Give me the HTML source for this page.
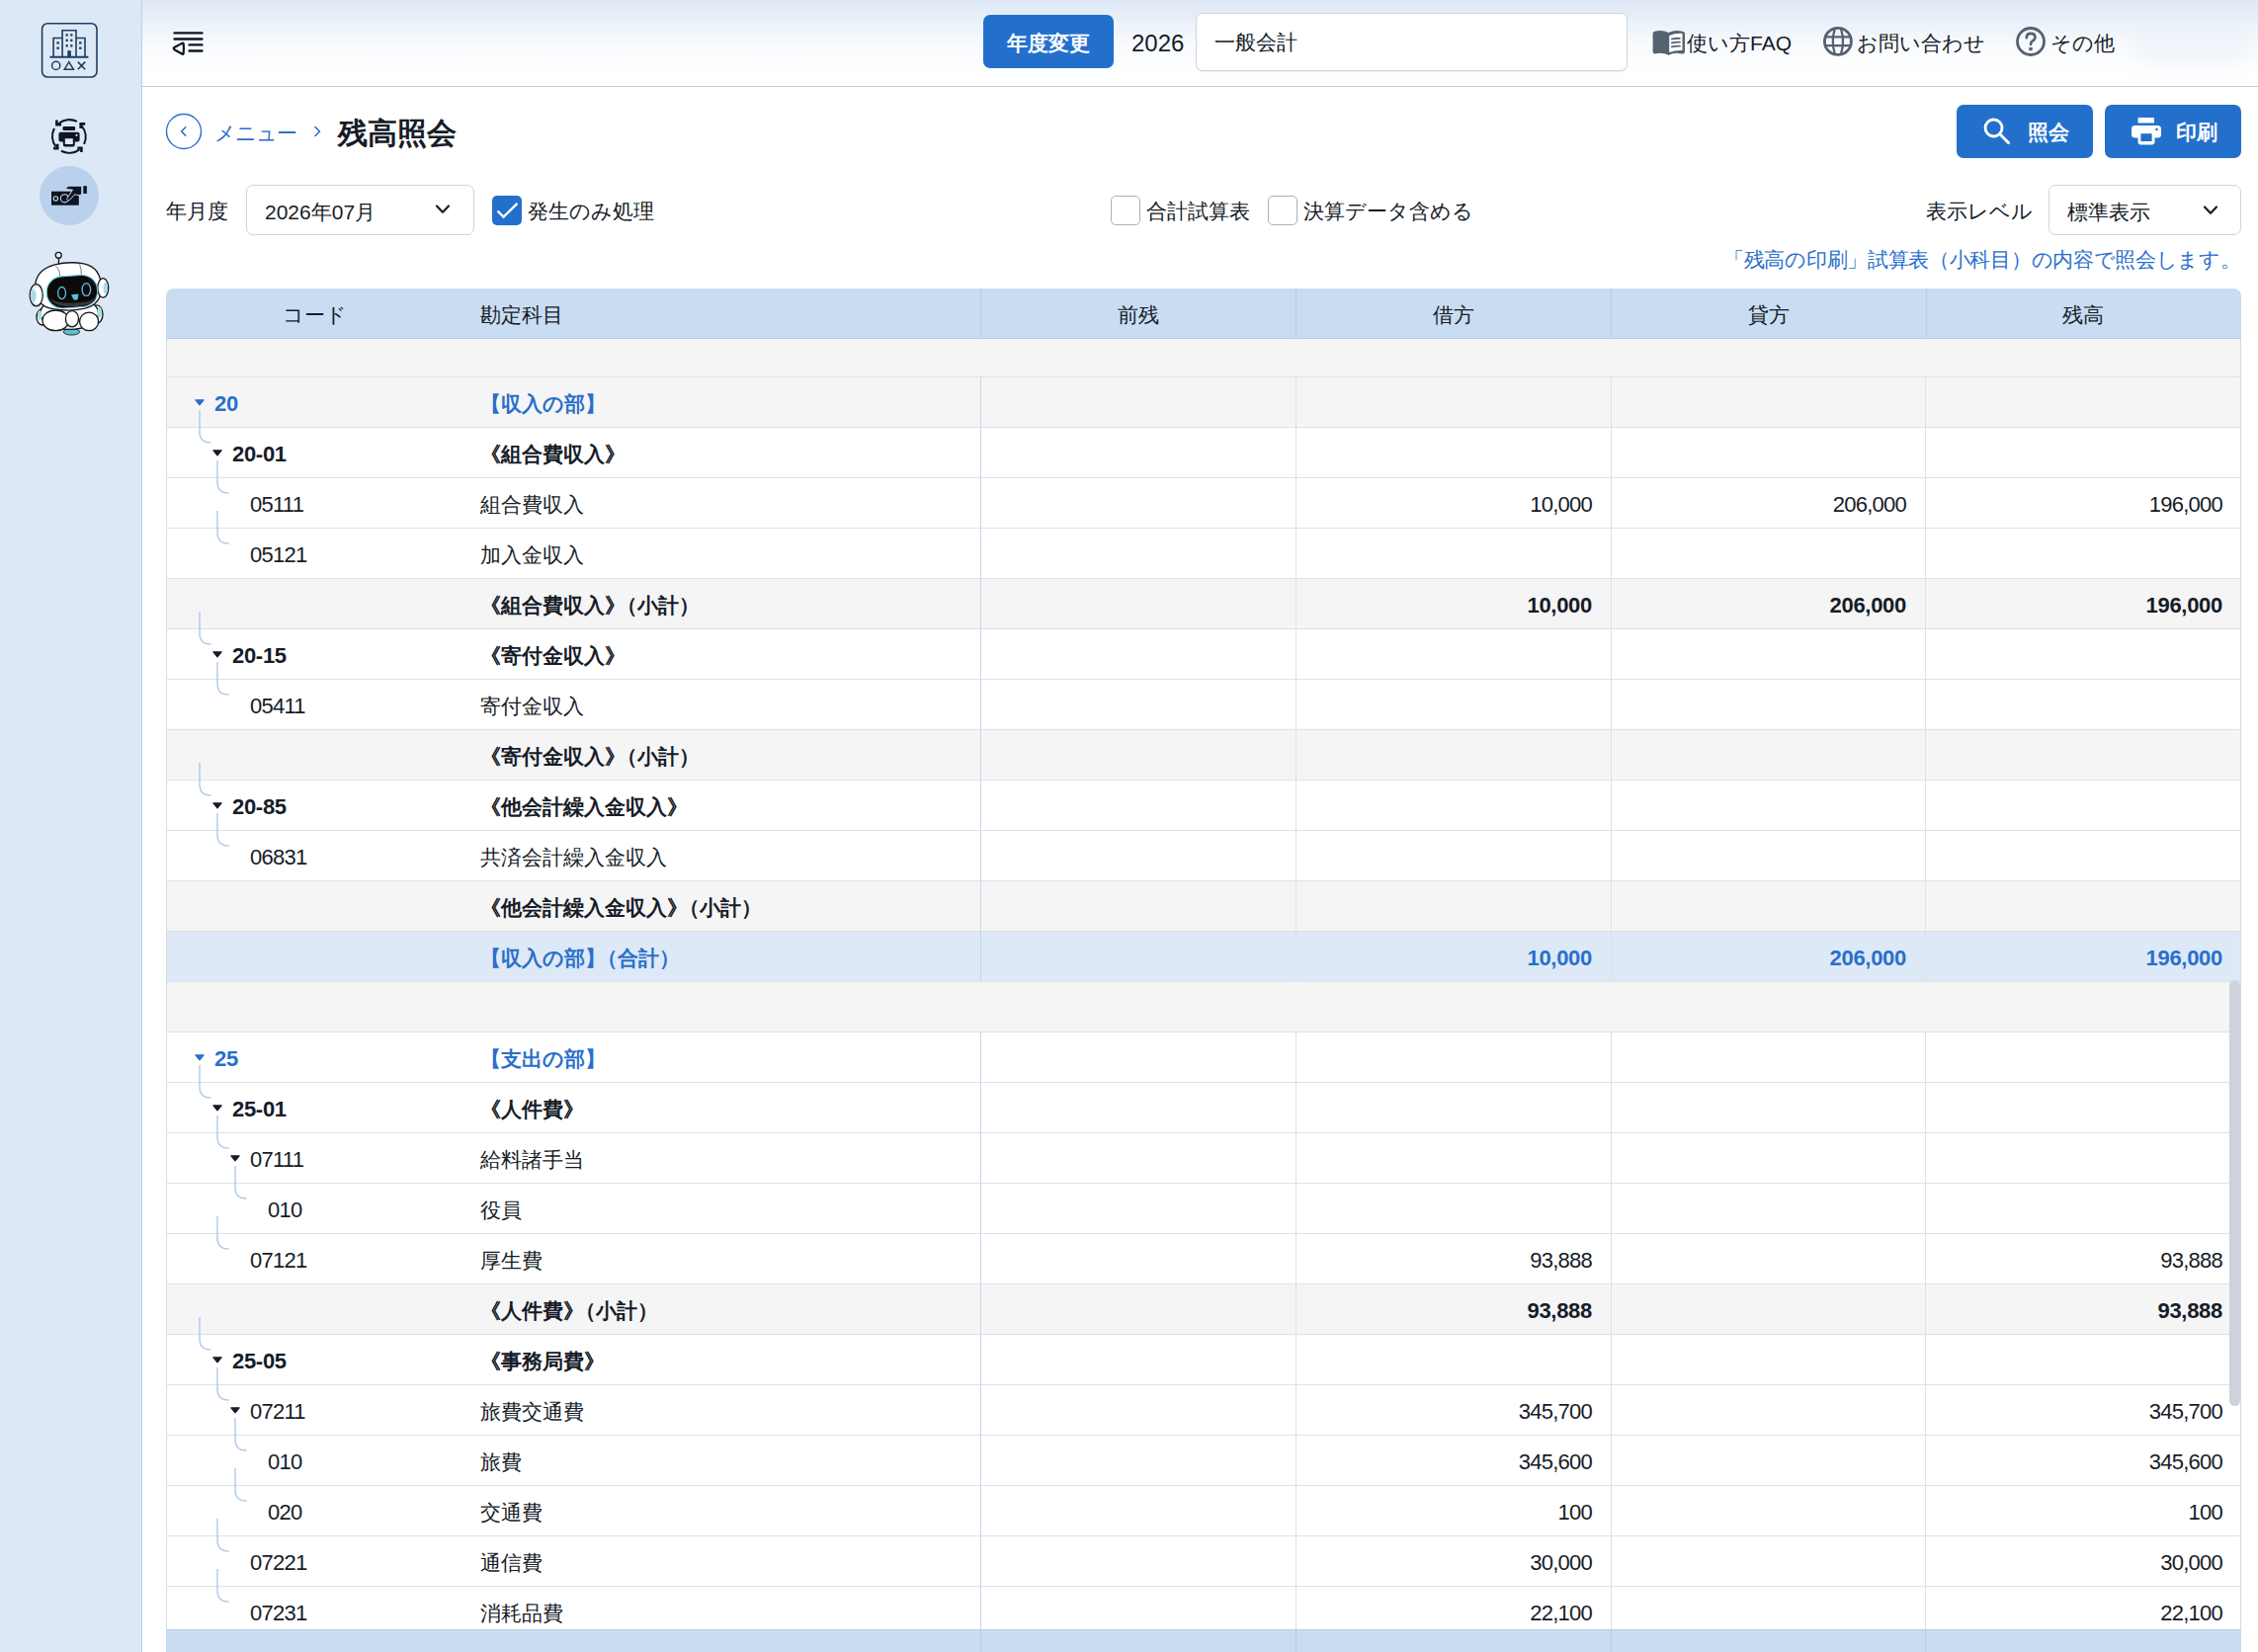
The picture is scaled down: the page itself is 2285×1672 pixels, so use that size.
<!DOCTYPE html>
<html lang="ja">
<head>
<meta charset="utf-8">
<title>残高照会</title>
<style>
*{box-sizing:border-box;margin:0;padding:0}
html,body{width:2285px;height:1672px;overflow:hidden;background:#fff}
body{font-family:"Liberation Sans",sans-serif;color:#161c28;position:relative;font-size:21px}
.abs{position:absolute}
/* sidebar */
#side{position:absolute;left:0;top:0;width:144px;height:1672px;background:#dde8f6;border-right:1px solid #b9cfea}
/* header */
#hdr{position:absolute;left:144px;top:0;width:2141px;height:88px;background:linear-gradient(180deg,#dde8f5 0%,#edf3fa 30%,#f8fafd 52%,#fdfeff 75%,#ffffff 100%);border-bottom:1px solid #b9cfea}
.btn{position:absolute;background:#2370cc;color:#fff;border-radius:7px;font-weight:bold}
.txt{position:absolute;white-space:nowrap;line-height:1}
.sel{position:absolute;background:#fff;border:1px solid #cfd4dc;border-radius:7px}
.cb{position:absolute;width:30px;height:30px;border:1px solid #a9b0bc;border-radius:5px;background:#fff}
/* table */
#tbl{position:absolute;left:168px;top:0;width:2100px;height:1672px}
#thead{position:absolute;left:0;top:292px;width:2100px;height:51px;background:#c9ddf2;border-bottom:1px solid #b4cce9;border-radius:8px 8px 0 0}
#thead .hd{position:absolute;top:0;height:50px;width:1px;background:#b7cdea}
#thead .ht{position:absolute;top:2px;line-height:50px;white-space:nowrap}
.row{position:absolute;left:0;width:2100px;height:51px;border-bottom:1px solid #dde1e9}
.vd{position:absolute;top:0;height:50px;width:1px;background:#dde1e9}
.vd.first{left:824px;background:#c3d6ef}
.code,.name,.num{position:absolute;top:0;line-height:50px;padding-top:2px;white-space:nowrap}
.code,.num{font-size:22px;letter-spacing:-0.75px}
.code.t-bold,.num.t-bold,.code.t-blue,.num.t-blue{letter-spacing:-0.3px}
.name{left:318px}
.sq{margin-left:-9.5px}
.t-blue{color:#2a6fcc;font-weight:bold}
.t-bold{font-weight:bold}
.tri{position:absolute;top:22px}
.conn{position:absolute;z-index:2;overflow:visible}
#spacer0{position:absolute;left:0;top:343px;width:2100px;height:39px;background:#f5f5f5;border-bottom:1px solid #dde1e9}
#lb{position:absolute;left:0;top:343px;width:1px;height:1329px;background:#d6dbe4;z-index:3}
#rb{position:absolute;left:2099px;top:343px;width:1px;height:1329px;background:#d6dbe4;z-index:3}
#foot{position:absolute;left:0;top:1649px;width:2100px;height:23px;background:#c9ddf2;border-top:1px solid #b4cce9;z-index:3}
#foot .hd{position:absolute;top:0;height:23px;width:1px;background:#b7cdea}
#scroll{position:absolute;left:2256px;top:992px;width:11px;height:431px;border-radius:6px;background:#cdd2db;z-index:4}
</style>
</head>
<body>
<div id="side">
  <!-- logo -->
  <svg class="abs" style="left:30px;top:10px" width="80" height="80" viewBox="0 0 80 80">
    <g fill="none" stroke="#1f3e60" stroke-width="1.6" stroke-linejoin="miter">
      <rect x="12.6" y="13.8" width="55.4" height="54.2" rx="5.6"/>
      <path d="M24.1 47.7 V28.5 H33.1 M33.1 47.7 V20.8 H47 V47.7 M47 28.5 H56 V47.7"/>
      <path d="M21.2 47.7 H58.7" stroke-width="1.9" stroke-linecap="round"/>
      <circle cx="26.7" cy="56.4" r="4.1" stroke-width="1.5"/>
      <path d="M35.2 60.3 L39.8 52.6 L44.4 60.3 Z" stroke-width="1.5"/>
      <path d="M48.8 52.6 L56.2 60.2 M56.2 52.6 L48.8 60.2" stroke-width="1.6"/>
    </g>
    <g fill="#1f3e60">
      <rect x="36.6" y="24.2" width="2.2" height="2.4"/><rect x="41.2" y="24.2" width="2.2" height="2.4"/>
      <rect x="36.6" y="29.6" width="2.2" height="2.4"/><rect x="41.2" y="29.6" width="2.2" height="2.4"/>
      <rect x="36.6" y="35.1" width="2.2" height="2.4"/><rect x="41.2" y="35.1" width="2.2" height="2.4"/>
      <rect x="27.4" y="32.2" width="2.4" height="2.4"/><rect x="27.4" y="37.5" width="2.4" height="2.4"/>
      <rect x="50.1" y="32.2" width="2.4" height="2.4"/><rect x="50.1" y="37.5" width="2.4" height="2.4"/>
      <rect x="38.3" y="41.2" width="3.6" height="6.5"/>
    </g>
  </svg>
  <!-- print rotate icon -->
  <svg class="abs" style="left:50px;top:118px" width="40" height="40" viewBox="0 0 40 40">
    <g fill="none" stroke="#0f1522" stroke-width="2.1">
      <path d="M27.9 4.9 A17.3 17.3 0 0 0 9.2 7.2"/>
      <path d="M32.6 9.4 A17.3 17.3 0 0 1 35.1 27.9"/>
      <path d="M30.4 33.3 A17.3 17.3 0 0 1 11.9 34.8"/>
      <path d="M6.6 30.4 A17.3 17.3 0 0 1 4.9 11.9"/>
    </g>
    <g fill="none" stroke="#0f1522" stroke-width="2.6" stroke-linejoin="miter" stroke-linecap="butt">
      <path d="M7.4 3.6 V8.3 H12"/>
      <path d="M36.2 7.4 H31.7 V11.9"/>
      <path d="M28.4 31.9 H32.4 V36"/>
      <path d="M4 32.1 H8.2 V27.8"/>
    </g>
    <g fill="#0f1522">
      <rect x="13.5" y="10" width="12.6" height="4" rx="1"/>
      <path d="M11.4 15.8 H28.6 Q30.6 15.8 30.6 17.8 V23.4 Q30.6 25.4 28.6 25.4 H25.8 V28.6 Q25.8 30.6 23.8 30.6 H15.8 Q13.8 30.6 13.8 28.6 V25.4 H11.4 Q9.4 25.4 9.4 23.4 V17.8 Q9.4 15.8 11.4 15.8 Z"/>
    </g>
    <rect x="15.8" y="22.2" width="8" height="5.8" fill="#dde8f6"/>
    <circle cx="27.5" cy="18.8" r="1.1" fill="#dde8f6"/>
  </svg>
  <!-- active circle -->
  <div class="abs" style="left:40px;top:168px;width:60px;height:60px;border-radius:50%;background:#bad1ee"></div>
  <svg class="abs" style="left:46px;top:178px" width="48" height="40" viewBox="0 0 48 40">
    <rect x="6" y="15.7" width="27.8" height="14" fill="#0f1522"/>
    <circle cx="10.4" cy="22.9" r="2.2" fill="none" stroke="#c3daf4" stroke-width="1.1"/>
    <circle cx="19.4" cy="22.8" r="4.1" fill="none" stroke="#c3daf4" stroke-width="1.1"/>
    <path d="M19.9 13.6 L23.2 10.2 H36.8 V18.2 Q35.6 19.7 33.4 19.6 Q31.4 19.5 29.8 18.6 L24.6 24.3 Q23.4 25.4 22.3 24.5 Q21.3 23.6 22.1 22.4 L27.3 14.4 Z" fill="#0f1522" stroke="#c3daf4" stroke-width="1"/>
    <path d="M19.4 13.9 L27.6 14.2" stroke="#c3daf4" stroke-width="1"/>
    <rect x="38.3" y="10.2" width="3.6" height="7.7" fill="#0f1522"/>
  </svg>
  <!-- robot -->
  <svg class="abs" style="left:25px;top:250px" width="90" height="90" viewBox="0 0 1652 1652">
    <g stroke="#161616" stroke-width="24" fill="#fff">
      <line x1="632" y1="200" x2="632" y2="320"/>
      <circle cx="628" cy="152" r="55" fill="#d8f0f4"/>
      <ellipse cx="870" cy="1575" rx="150" ry="60" fill="#5bbfd2" stroke-width="16"/>
      <ellipse cx="330" cy="1300" rx="110" ry="150"/>
      <ellipse cx="1340" cy="1250" rx="110" ry="170"/>
      <ellipse cx="830" cy="1230" rx="540" ry="300"/>
      <path d="M190 760 Q200 420 560 330 Q820 260 1100 310 Q1420 380 1420 760 Q1420 1060 1120 1140 Q820 1210 520 1150 Q190 1080 190 760 Z"/>
      <ellipse cx="215" cy="895" rx="120" ry="205"/>
      <ellipse cx="1455" cy="760" rx="100" ry="180"/>
      <ellipse cx="575" cy="1365" rx="245" ry="190"/>
      <ellipse cx="1195" cy="1385" rx="175" ry="170"/>
      <ellipse cx="880" cy="1335" rx="120" ry="150"/>
    </g>
    <ellipse cx="230" cy="900" rx="85" ry="170" fill="none" stroke="#9fd8e6" stroke-width="14"/>
    <ellipse cx="160" cy="905" rx="55" ry="125" fill="#a8dde8"/>
    <ellipse cx="1500" cy="760" rx="40" ry="110" fill="#a8dde8"/>
    <ellipse cx="280" cy="1270" rx="40" ry="90" fill="#a8dde8"/>
    <ellipse cx="1390" cy="1210" rx="40" ry="100" fill="#a8dde8"/>
    <path d="M580 360 Q660 420 650 540 M1020 320 Q1060 430 1050 520" stroke="#333" stroke-width="12" fill="none"/>
    <rect x="410" y="535" width="940" height="590" rx="290" ry="280" transform="rotate(-4 880 830)" fill="#0d0a0b" stroke="#62c8dc" stroke-width="20"/>
    <path d="M470 930 Q520 1090 760 1100 Q1050 1110 1250 1040 Q1320 1000 1330 900 Q1280 1010 1060 1030 Q760 1060 580 1010 Q500 980 470 930 Z" fill="#3a3638"/>
    <path d="M1180 590 Q1300 640 1320 760 Q1300 660 1180 600 Z" fill="#3a3638"/>
    <ellipse cx="690" cy="855" rx="72" ry="112" fill="none" stroke="#56c1dc" stroke-width="24"/>
    <ellipse cx="1145" cy="790" rx="78" ry="118" fill="none" stroke="#56c1dc" stroke-width="24"/>
    <path d="M865 885 L1000 870 L985 975 Q940 1000 905 975 Z" fill="#56c1dc"/>
  </svg>
</div>

<div id="hdr">
  <!-- hamburger -->
  <svg class="abs" style="left:21px;top:22px" width="50" height="42" viewBox="0 0 50 42">
    <g fill="none" stroke="#0f1522" stroke-width="2.4" stroke-linecap="round">
      <path d="M11.6 11.4 H39.4"/>
      <path d="M11.6 17.5 H39.4"/>
      <path d="M26.6 23.4 H39.4"/>
      <path d="M26.6 29.5 H39.4"/>
      <path d="M10.9 27.1 Q10.6 26.6 11.4 26 L19.6 21.6 Q20.6 21.2 20.7 22.4 Q21.2 27.2 20.7 32 Q20.6 33.2 19.6 32.7 L11.4 28.2 Q10.6 27.6 10.9 27.1 Z" stroke-width="2.2" stroke-linejoin="round"/>
    </g>
  </svg>
  <div class="btn" style="left:851px;top:15px;width:132px;height:54px;font-size:21px;line-height:58px;text-align:center">年度変更</div>
  <div class="txt" style="left:1001px;top:32px;font-size:24px">2026</div>
  <div class="sel" style="left:1066px;top:13px;width:437px;height:59px;box-shadow:0 1px 1px rgba(0,0,0,.06)">
    <div class="txt" style="left:18px;top:18px;font-size:21px">一般会計</div>
  </div>
  <!-- book icon -->
  <svg class="abs" style="left:1528px;top:30px" width="34" height="27" viewBox="0 0 34 27">
    <path d="M0.6 4 Q0.6 2.2 2.5 1.8 Q5 1 8.4 0.9 Q12.5 0.9 16.5 2.9 Q20.5 0.9 24.6 0.9 Q28 1 30.6 1.8 Q33 2.3 33 4 V22.6 Q33 24.3 31 24.4 Q28 24.2 24.6 23.7 Q20.5 23.7 16.6 25.8 Q12.5 23.7 8.4 23.7 Q5 24 2.6 24.4 Q0.6 24.3 0.6 22.6 Z" fill="#556272"/>
    <path d="M17.2 6 Q23 3.6 30.5 3.9 V21.1 Q23 20.8 17.2 23 Z" fill="#fff"/>
    <path d="M19.8 9.5 Q23.5 8.6 27.9 8.8 M19.8 13.4 Q23.5 12.5 27.9 12.7 M19.8 17.3 Q23.5 16.4 27.9 16.6" fill="none" stroke="#556272" stroke-width="1.8" stroke-linecap="round"/>
  </svg>
  <div class="txt" style="left:1563px;top:33px;font-size:21px">使い方FAQ</div>
  <!-- globe -->
  <svg class="abs" style="left:1700px;top:26px" width="32" height="32" viewBox="0 0 32 32">
    <g fill="none" stroke="#556272">
      <circle cx="15.9" cy="15.9" r="13.5" stroke-width="2.8"/>
      <path d="M12.7 3.5 L10.9 11.2 V20.2 L12.7 28.3 M19.1 3.5 L20.9 11.2 V20.2 L19.1 28.3" stroke-width="2.3" stroke-linejoin="round"/>
      <path d="M2.5 11.3 H29.3 M2.5 20.1 H29.3" stroke-width="2.2"/>
    </g>
  </svg>
  <div class="txt" style="left:1735px;top:33px;font-size:21px">お問い合わせ</div>
  <!-- question -->
  <svg class="abs" style="left:1895px;top:26px" width="32" height="32" viewBox="0 0 32 32">
    <circle cx="16" cy="16" r="13.5" fill="none" stroke="#556272" stroke-width="2.8"/>
    <path d="M11.8 12.2 Q11.8 7.8 16 7.8 Q20.4 7.8 20.4 11.8 Q20.4 14.2 17.6 15.6 Q16 16.4 16 19" fill="none" stroke="#556272" stroke-width="2.7" stroke-linecap="round"/>
    <rect x="14.3" y="22" width="3.4" height="3.2" fill="#556272"/>
  </svg>
  <div class="txt" style="left:1931px;top:33px;font-size:21px">その他</div>
  <!-- blurred user -->
  <div class="abs" style="left:2015px;top:22px;width:118px;height:46px;border-radius:20px;background:rgba(232,239,248,.45);filter:blur(8px)"></div>
</div>

<!-- breadcrumb -->
<svg class="abs" style="left:166px;top:113px" width="40" height="40" viewBox="0 0 40 40">
  <circle cx="20" cy="20" r="17.5" fill="none" stroke="#2a6fcc" stroke-width="1.4"/>
  <path d="M21.8 15.8 L17.6 20 L21.8 24.2" fill="none" stroke="#2a6fcc" stroke-width="1.6" stroke-linecap="round" stroke-linejoin="round"/>
</svg>
<div class="txt" style="left:217px;top:124px;font-size:21px;letter-spacing:-1px;color:#2a6fcc">メニュー</div>
<svg class="abs" style="left:315px;top:125px" width="14" height="16" viewBox="0 0 14 16">
  <path d="M4 3.5 L8.5 8 L4 12.5" fill="none" stroke="#2a6fcc" stroke-width="1.6" stroke-linecap="round" stroke-linejoin="round"/>
</svg>
<div class="txt" style="left:342px;top:120px;font-size:30px;font-weight:bold">残高照会</div>

<div class="btn" style="left:1980px;top:106px;width:138px;height:54px"></div>
<svg class="abs" style="left:2006px;top:118px" width="30" height="30" viewBox="0 0 30 30">
  <circle cx="11.5" cy="11.5" r="8.5" fill="none" stroke="#fff" stroke-width="2.8"/>
  <path d="M17.8 17.8 L26.5 26.5" stroke="#fff" stroke-width="3" stroke-linecap="round"/>
</svg>
<div class="txt" style="left:2052px;top:123px;font-size:21px;color:#fff;font-weight:bold">照会</div>
<div class="btn" style="left:2130px;top:106px;width:138px;height:54px"></div>
<svg class="abs" style="left:2156px;top:118px" width="32" height="30" viewBox="0 0 32 30">
  <rect x="7.5" y="1" width="16.5" height="5.6" rx="1.2" fill="#fff"/>
  <path d="M4.5 9 H27.5 Q31 9 31 12.5 V18 Q31 21.5 27.5 21.5 H24.5 V25.5 Q24.5 28.5 21.5 28.5 H10.5 Q7.5 28.5 7.5 25.5 V21.5 H4.5 Q1 21.5 1 18 V12.5 Q1 9 4.5 9 Z" fill="#fff"/>
  <rect x="10.4" y="17.2" width="11.2" height="7.8" fill="#2370cc"/>
  <circle cx="26.5" cy="13" r="1.3" fill="#2370cc"/>
</svg>
<div class="txt" style="left:2202px;top:123px;font-size:21px;color:#fff;font-weight:bold">印刷</div>

<!-- filter row -->
<div class="txt" style="left:168px;top:203px;font-size:21px">年月度</div>
<div class="sel" style="left:249px;top:187px;width:231px;height:51px">
  <div class="txt" style="left:18px;top:16px;font-size:21px">2026年07月</div>
  <svg class="abs" style="left:190px;top:18px" width="16" height="12" viewBox="0 0 16 12"><path d="M2 2.5 L8 8.8 L14 2.5" fill="none" stroke="#161c28" stroke-width="2.2" stroke-linecap="round" stroke-linejoin="round"/></svg>
</div>
<div class="abs" style="left:498px;top:198px;width:30px;height:30px;border-radius:5px;background:#2370cc"></div>
<svg class="abs" style="left:498px;top:198px" width="30" height="30" viewBox="0 0 30 30"><path d="M5.5 15.5 L11.5 21.5 L25.5 7.8" fill="none" stroke="#fff" stroke-width="2.4"/></svg>
<div class="txt" style="left:534px;top:203px;font-size:21px">発生のみ処理</div>
<div class="cb" style="left:1124px;top:198px"></div>
<div class="txt" style="left:1160px;top:203px;font-size:21px">合計試算表</div>
<div class="cb" style="left:1283px;top:198px"></div>
<div class="txt" style="left:1319px;top:203px;font-size:21px">決算データ含める</div>
<div class="txt" style="left:1949px;top:203px;font-size:21px">表示レベル</div>
<div class="sel" style="left:2073px;top:187px;width:195px;height:51px">
  <div class="txt" style="left:18px;top:16px;font-size:21px">標準表示</div>
  <svg class="abs" style="left:155px;top:19px" width="16" height="12" viewBox="0 0 16 12"><path d="M2 2.5 L8 8.8 L14 2.5" fill="none" stroke="#161c28" stroke-width="2.2" stroke-linecap="round" stroke-linejoin="round"/></svg>
</div>
<div class="txt" style="left:1744px;top:252px;font-size:21px;letter-spacing:-0.3px;color:#2a6fcc">「残高の印刷」試算表（小科目）の内容で照会します。</div>

<div id="tbl">
  <div id="thead">
    <div class="ht" style="left:118px">コード</div>
    <div class="ht" style="left:318px">勘定科目</div>
    <div class="hd" style="left:824px"></div>
    <div class="hd" style="left:1143px"></div>
    <div class="hd" style="left:1462px"></div>
    <div class="hd" style="left:1781px"></div>
    <div class="ht" style="left:824px;width:319px;text-align:center">前残</div>
    <div class="ht" style="left:1143px;width:319px;text-align:center">借方</div>
    <div class="ht" style="left:1462px;width:319px;text-align:center">貸方</div>
    <div class="ht" style="left:1780px;width:320px;text-align:center">残高</div>
  </div>
  <div id="spacer0"></div>
<div class="row" style="top:382px;background:#f5f5f5">
<div class="vd first"></div>
<div class="vd" style="left:1143px"></div>
<div class="vd" style="left:1462px"></div>
<div class="vd" style="left:1780px"></div>
<div class="code t-blue" style="left:49px">20</div>
<svg class="tri" style="left:29px" width="10" height="7" viewBox="0 0 10 7"><path d="M0.6 0.8 L9.4 0.8 L5 6.2 Z" fill="#2a6fcc" stroke="#2a6fcc" stroke-width="1" stroke-linejoin="round"/></svg>
<div class="name t-blue">【収入の部】</div>
</div>
<div class="row" style="top:433px;background:#ffffff">
<div class="vd first"></div>
<div class="vd" style="left:1143px"></div>
<div class="vd" style="left:1462px"></div>
<div class="vd" style="left:1780px"></div>
<div class="code t-bold" style="left:67px">20-01</div>
<svg class="tri" style="left:47px" width="10" height="7" viewBox="0 0 10 7"><path d="M0.6 0.8 L9.4 0.8 L5 6.2 Z" fill="#161c28" stroke="#161c28" stroke-width="1" stroke-linejoin="round"/></svg>
<div class="name t-bold">《組合費収入》</div>
</div>
<svg class="conn" style="left:32px;top:415px" width="16" height="35" viewBox="0 0 16 35"><path d="M2 0 V22 Q2 33 13.5 33" fill="none" stroke="#a9c5ea" stroke-width="1.3"/></svg>
<div class="row" style="top:484px;background:#ffffff">
<div class="vd first"></div>
<div class="vd" style="left:1143px"></div>
<div class="vd" style="left:1462px"></div>
<div class="vd" style="left:1780px"></div>
<div class="code t-norm" style="left:85px">05111</div>
<div class="name t-norm">組合費収入</div>
<div class="num t-norm" style="right:657px">10,000</div>
<div class="num t-norm" style="right:339px">206,000</div>
<div class="num t-norm" style="right:19px">196,000</div>
</div>
<svg class="conn" style="left:50px;top:466px" width="16" height="35" viewBox="0 0 16 35"><path d="M2 0 V22 Q2 33 13.5 33" fill="none" stroke="#a9c5ea" stroke-width="1.3"/></svg>
<div class="row" style="top:535px;background:#ffffff">
<div class="vd first"></div>
<div class="vd" style="left:1143px"></div>
<div class="vd" style="left:1462px"></div>
<div class="vd" style="left:1780px"></div>
<div class="code t-norm" style="left:85px">05121</div>
<div class="name t-norm">加入金収入</div>
</div>
<svg class="conn" style="left:50px;top:517px" width="16" height="35" viewBox="0 0 16 35"><path d="M2 0 V22 Q2 33 13.5 33" fill="none" stroke="#a9c5ea" stroke-width="1.3"/></svg>
<div class="row" style="top:586px;background:#f5f5f5">
<div class="vd first"></div>
<div class="vd" style="left:1143px"></div>
<div class="vd" style="left:1462px"></div>
<div class="vd" style="left:1780px"></div>
<div class="name t-bold">《組合費収入》<span class="sq">（小計）</span></div>
<div class="num t-bold" style="right:657px">10,000</div>
<div class="num t-bold" style="right:339px">206,000</div>
<div class="num t-bold" style="right:19px">196,000</div>
</div>
<div class="row" style="top:637px;background:#ffffff">
<div class="vd first"></div>
<div class="vd" style="left:1143px"></div>
<div class="vd" style="left:1462px"></div>
<div class="vd" style="left:1780px"></div>
<div class="code t-bold" style="left:67px">20-15</div>
<svg class="tri" style="left:47px" width="10" height="7" viewBox="0 0 10 7"><path d="M0.6 0.8 L9.4 0.8 L5 6.2 Z" fill="#161c28" stroke="#161c28" stroke-width="1" stroke-linejoin="round"/></svg>
<div class="name t-bold">《寄付金収入》</div>
</div>
<svg class="conn" style="left:32px;top:619px" width="16" height="35" viewBox="0 0 16 35"><path d="M2 0 V22 Q2 33 13.5 33" fill="none" stroke="#a9c5ea" stroke-width="1.3"/></svg>
<div class="row" style="top:688px;background:#ffffff">
<div class="vd first"></div>
<div class="vd" style="left:1143px"></div>
<div class="vd" style="left:1462px"></div>
<div class="vd" style="left:1780px"></div>
<div class="code t-norm" style="left:85px">05411</div>
<div class="name t-norm">寄付金収入</div>
</div>
<svg class="conn" style="left:50px;top:670px" width="16" height="35" viewBox="0 0 16 35"><path d="M2 0 V22 Q2 33 13.5 33" fill="none" stroke="#a9c5ea" stroke-width="1.3"/></svg>
<div class="row" style="top:739px;background:#f5f5f5">
<div class="vd first"></div>
<div class="vd" style="left:1143px"></div>
<div class="vd" style="left:1462px"></div>
<div class="vd" style="left:1780px"></div>
<div class="name t-bold">《寄付金収入》<span class="sq">（小計）</span></div>
</div>
<div class="row" style="top:790px;background:#ffffff">
<div class="vd first"></div>
<div class="vd" style="left:1143px"></div>
<div class="vd" style="left:1462px"></div>
<div class="vd" style="left:1780px"></div>
<div class="code t-bold" style="left:67px">20-85</div>
<svg class="tri" style="left:47px" width="10" height="7" viewBox="0 0 10 7"><path d="M0.6 0.8 L9.4 0.8 L5 6.2 Z" fill="#161c28" stroke="#161c28" stroke-width="1" stroke-linejoin="round"/></svg>
<div class="name t-bold">《他会計繰入金収入》</div>
</div>
<svg class="conn" style="left:32px;top:772px" width="16" height="35" viewBox="0 0 16 35"><path d="M2 0 V22 Q2 33 13.5 33" fill="none" stroke="#a9c5ea" stroke-width="1.3"/></svg>
<div class="row" style="top:841px;background:#ffffff">
<div class="vd first"></div>
<div class="vd" style="left:1143px"></div>
<div class="vd" style="left:1462px"></div>
<div class="vd" style="left:1780px"></div>
<div class="code t-norm" style="left:85px">06831</div>
<div class="name t-norm">共済会計繰入金収入</div>
</div>
<svg class="conn" style="left:50px;top:823px" width="16" height="35" viewBox="0 0 16 35"><path d="M2 0 V22 Q2 33 13.5 33" fill="none" stroke="#a9c5ea" stroke-width="1.3"/></svg>
<div class="row" style="top:892px;background:#f5f5f5">
<div class="vd first"></div>
<div class="vd" style="left:1143px"></div>
<div class="vd" style="left:1462px"></div>
<div class="vd" style="left:1780px"></div>
<div class="name t-bold">《他会計繰入金収入》<span class="sq">（小計）</span></div>
</div>
<div class="row" style="top:943px;background:#dde9f7">
<div class="vd first"></div>
<div class="vd" style="left:1143px"></div>
<div class="vd" style="left:1462px"></div>
<div class="vd" style="left:1780px"></div>
<div class="name t-blue">【収入の部】<span class="sq">（合計）</span></div>
<div class="num t-blue" style="right:657px">10,000</div>
<div class="num t-blue" style="right:339px">206,000</div>
<div class="num t-blue" style="right:19px">196,000</div>
</div>
<div class="row" style="top:994px;background:#f5f5f5">
</div>
<div class="row" style="top:1045px;background:#ffffff">
<div class="vd first"></div>
<div class="vd" style="left:1143px"></div>
<div class="vd" style="left:1462px"></div>
<div class="vd" style="left:1780px"></div>
<div class="code t-blue" style="left:49px">25</div>
<svg class="tri" style="left:29px" width="10" height="7" viewBox="0 0 10 7"><path d="M0.6 0.8 L9.4 0.8 L5 6.2 Z" fill="#2a6fcc" stroke="#2a6fcc" stroke-width="1" stroke-linejoin="round"/></svg>
<div class="name t-blue">【支出の部】</div>
</div>
<div class="row" style="top:1096px;background:#ffffff">
<div class="vd first"></div>
<div class="vd" style="left:1143px"></div>
<div class="vd" style="left:1462px"></div>
<div class="vd" style="left:1780px"></div>
<div class="code t-bold" style="left:67px">25-01</div>
<svg class="tri" style="left:47px" width="10" height="7" viewBox="0 0 10 7"><path d="M0.6 0.8 L9.4 0.8 L5 6.2 Z" fill="#161c28" stroke="#161c28" stroke-width="1" stroke-linejoin="round"/></svg>
<div class="name t-bold">《人件費》</div>
</div>
<svg class="conn" style="left:32px;top:1078px" width="16" height="35" viewBox="0 0 16 35"><path d="M2 0 V22 Q2 33 13.5 33" fill="none" stroke="#a9c5ea" stroke-width="1.3"/></svg>
<div class="row" style="top:1147px;background:#ffffff">
<div class="vd first"></div>
<div class="vd" style="left:1143px"></div>
<div class="vd" style="left:1462px"></div>
<div class="vd" style="left:1780px"></div>
<div class="code t-norm" style="left:85px">07111</div>
<svg class="tri" style="left:65px" width="10" height="7" viewBox="0 0 10 7"><path d="M0.6 0.8 L9.4 0.8 L5 6.2 Z" fill="#161c28" stroke="#161c28" stroke-width="1" stroke-linejoin="round"/></svg>
<div class="name t-norm">給料諸手当</div>
</div>
<svg class="conn" style="left:50px;top:1129px" width="16" height="35" viewBox="0 0 16 35"><path d="M2 0 V22 Q2 33 13.5 33" fill="none" stroke="#a9c5ea" stroke-width="1.3"/></svg>
<div class="row" style="top:1198px;background:#ffffff">
<div class="vd first"></div>
<div class="vd" style="left:1143px"></div>
<div class="vd" style="left:1462px"></div>
<div class="vd" style="left:1780px"></div>
<div class="code t-norm" style="left:103px">010</div>
<div class="name t-norm">役員</div>
</div>
<svg class="conn" style="left:68px;top:1180px" width="16" height="35" viewBox="0 0 16 35"><path d="M2 0 V22 Q2 33 13.5 33" fill="none" stroke="#a9c5ea" stroke-width="1.3"/></svg>
<div class="row" style="top:1249px;background:#ffffff">
<div class="vd first"></div>
<div class="vd" style="left:1143px"></div>
<div class="vd" style="left:1462px"></div>
<div class="vd" style="left:1780px"></div>
<div class="code t-norm" style="left:85px">07121</div>
<div class="name t-norm">厚生費</div>
<div class="num t-norm" style="right:657px">93,888</div>
<div class="num t-norm" style="right:19px">93,888</div>
</div>
<svg class="conn" style="left:50px;top:1231px" width="16" height="35" viewBox="0 0 16 35"><path d="M2 0 V22 Q2 33 13.5 33" fill="none" stroke="#a9c5ea" stroke-width="1.3"/></svg>
<div class="row" style="top:1300px;background:#f5f5f5">
<div class="vd first"></div>
<div class="vd" style="left:1143px"></div>
<div class="vd" style="left:1462px"></div>
<div class="vd" style="left:1780px"></div>
<div class="name t-bold">《人件費》<span class="sq">（小計）</span></div>
<div class="num t-bold" style="right:657px">93,888</div>
<div class="num t-bold" style="right:19px">93,888</div>
</div>
<div class="row" style="top:1351px;background:#ffffff">
<div class="vd first"></div>
<div class="vd" style="left:1143px"></div>
<div class="vd" style="left:1462px"></div>
<div class="vd" style="left:1780px"></div>
<div class="code t-bold" style="left:67px">25-05</div>
<svg class="tri" style="left:47px" width="10" height="7" viewBox="0 0 10 7"><path d="M0.6 0.8 L9.4 0.8 L5 6.2 Z" fill="#161c28" stroke="#161c28" stroke-width="1" stroke-linejoin="round"/></svg>
<div class="name t-bold">《事務局費》</div>
</div>
<svg class="conn" style="left:32px;top:1333px" width="16" height="35" viewBox="0 0 16 35"><path d="M2 0 V22 Q2 33 13.5 33" fill="none" stroke="#a9c5ea" stroke-width="1.3"/></svg>
<div class="row" style="top:1402px;background:#ffffff">
<div class="vd first"></div>
<div class="vd" style="left:1143px"></div>
<div class="vd" style="left:1462px"></div>
<div class="vd" style="left:1780px"></div>
<div class="code t-norm" style="left:85px">07211</div>
<svg class="tri" style="left:65px" width="10" height="7" viewBox="0 0 10 7"><path d="M0.6 0.8 L9.4 0.8 L5 6.2 Z" fill="#161c28" stroke="#161c28" stroke-width="1" stroke-linejoin="round"/></svg>
<div class="name t-norm">旅費交通費</div>
<div class="num t-norm" style="right:657px">345,700</div>
<div class="num t-norm" style="right:19px">345,700</div>
</div>
<svg class="conn" style="left:50px;top:1384px" width="16" height="35" viewBox="0 0 16 35"><path d="M2 0 V22 Q2 33 13.5 33" fill="none" stroke="#a9c5ea" stroke-width="1.3"/></svg>
<div class="row" style="top:1453px;background:#ffffff">
<div class="vd first"></div>
<div class="vd" style="left:1143px"></div>
<div class="vd" style="left:1462px"></div>
<div class="vd" style="left:1780px"></div>
<div class="code t-norm" style="left:103px">010</div>
<div class="name t-norm">旅費</div>
<div class="num t-norm" style="right:657px">345,600</div>
<div class="num t-norm" style="right:19px">345,600</div>
</div>
<svg class="conn" style="left:68px;top:1435px" width="16" height="35" viewBox="0 0 16 35"><path d="M2 0 V22 Q2 33 13.5 33" fill="none" stroke="#a9c5ea" stroke-width="1.3"/></svg>
<div class="row" style="top:1504px;background:#ffffff">
<div class="vd first"></div>
<div class="vd" style="left:1143px"></div>
<div class="vd" style="left:1462px"></div>
<div class="vd" style="left:1780px"></div>
<div class="code t-norm" style="left:103px">020</div>
<div class="name t-norm">交通費</div>
<div class="num t-norm" style="right:657px">100</div>
<div class="num t-norm" style="right:19px">100</div>
</div>
<svg class="conn" style="left:68px;top:1486px" width="16" height="35" viewBox="0 0 16 35"><path d="M2 0 V22 Q2 33 13.5 33" fill="none" stroke="#a9c5ea" stroke-width="1.3"/></svg>
<div class="row" style="top:1555px;background:#ffffff">
<div class="vd first"></div>
<div class="vd" style="left:1143px"></div>
<div class="vd" style="left:1462px"></div>
<div class="vd" style="left:1780px"></div>
<div class="code t-norm" style="left:85px">07221</div>
<div class="name t-norm">通信費</div>
<div class="num t-norm" style="right:657px">30,000</div>
<div class="num t-norm" style="right:19px">30,000</div>
</div>
<svg class="conn" style="left:50px;top:1537px" width="16" height="35" viewBox="0 0 16 35"><path d="M2 0 V22 Q2 33 13.5 33" fill="none" stroke="#a9c5ea" stroke-width="1.3"/></svg>
<div class="row" style="top:1606px;background:#ffffff">
<div class="vd first"></div>
<div class="vd" style="left:1143px"></div>
<div class="vd" style="left:1462px"></div>
<div class="vd" style="left:1780px"></div>
<div class="code t-norm" style="left:85px">07231</div>
<div class="name t-norm">消耗品費</div>
<div class="num t-norm" style="right:657px">22,100</div>
<div class="num t-norm" style="right:19px">22,100</div>
</div>
<svg class="conn" style="left:50px;top:1588px" width="16" height="35" viewBox="0 0 16 35"><path d="M2 0 V22 Q2 33 13.5 33" fill="none" stroke="#a9c5ea" stroke-width="1.3"/></svg>
  <div id="lb"></div><div id="rb"></div>
  <div id="foot">
    <div class="hd" style="left:824px"></div>
    <div class="hd" style="left:1143px"></div>
    <div class="hd" style="left:1462px"></div>
    <div class="hd" style="left:1780px"></div>
  </div>
</div>
<div id="scroll"></div>
</body>
</html>
